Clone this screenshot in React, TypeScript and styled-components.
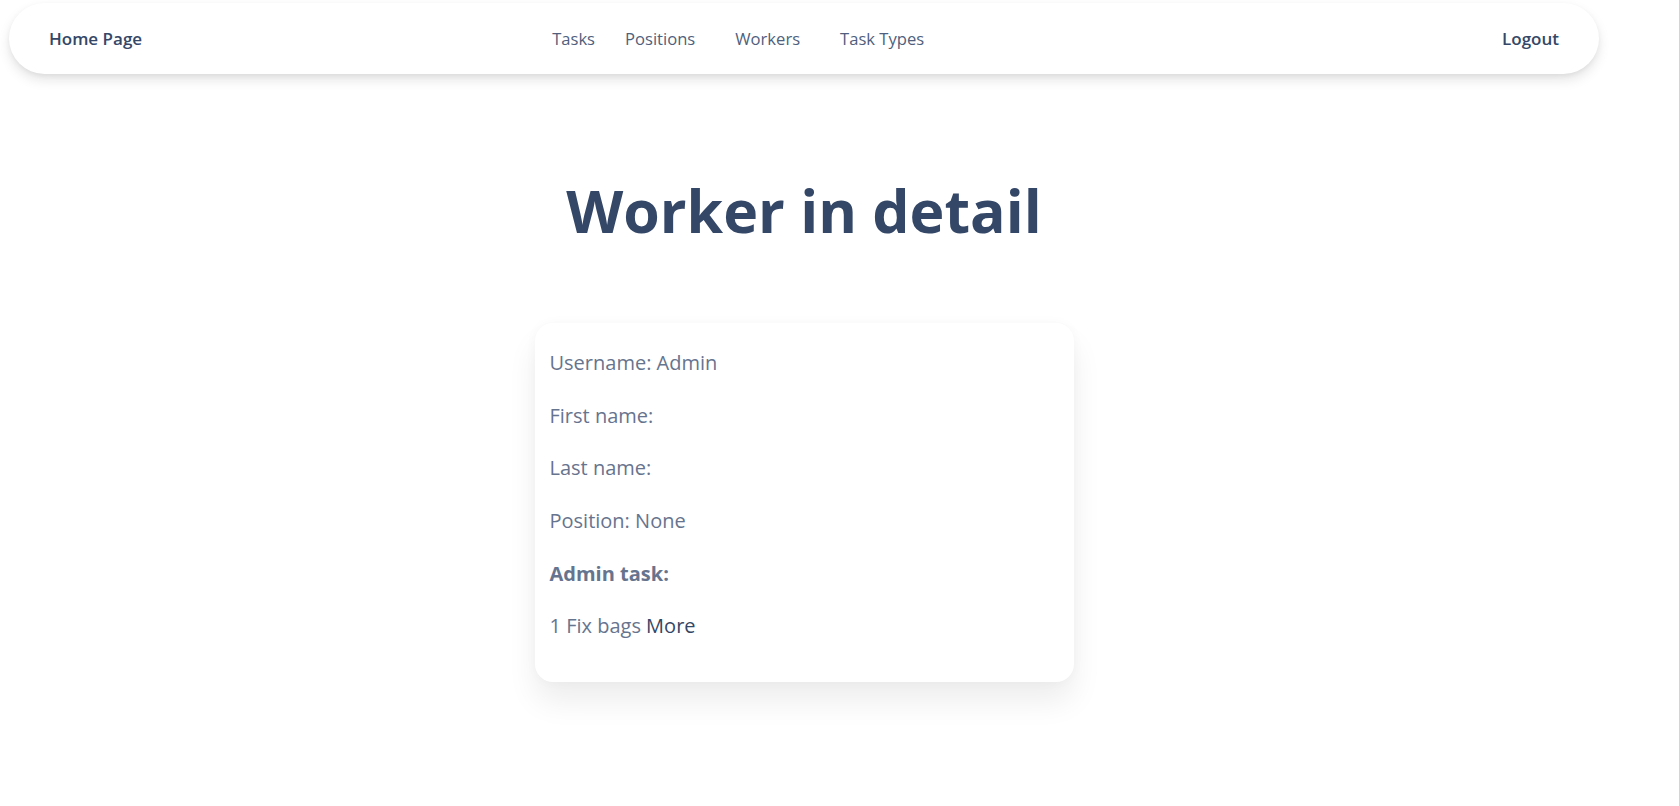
import React from "react";
import styled, { createGlobalStyle } from "styled-components";

const GlobalStyle = createGlobalStyle`
  html, body {
    margin: 0;
    padding: 0;
    background: #ffffff;
    font-family: "Open Sans", "Noto Sans", sans-serif;
  }
`;

const Page = styled.div`
  width: 1599px;
  min-height: 100vh;
  box-sizing: border-box;
  padding: 3px 0 80px 9px;
  display: flex;
  flex-direction: column;
  align-items: stretch;
`;

const NavBar = styled.nav`
  height: 71px;
  flex: none;
  border-radius: 36px;
  background: #ffffff;
  box-shadow: 0 6px 14px -2px rgba(20, 20, 20, 0.14), 0 2px 6px -1px rgba(20, 20, 20, 0.06);
  display: flex;
  align-items: center;
  padding: 0 40px 0 40px;
`;

const Brand = styled.a`
  font-size: 17px;
  font-weight: 600;
  color: #344767;
  text-decoration: none;
`;

const Links = styled.ul`
  list-style: none;
  margin: 0 0 0 410px;
  padding: 0;
  display: flex;
  align-items: center;
`;

const LinkItem = styled.li<{ $gap: number }>`
  margin-right: ${(p) => p.$gap}px;
`;

const NavLink = styled.a`
  font-size: 16.6px;
  font-weight: 400;
  color: #4f5f7d;
  text-decoration: none;
`;

const Logout = styled.a`
  margin-left: auto;
  font-size: 17px;
  font-weight: 600;
  color: #344767;
  text-decoration: none;
`;

const Title = styled.h1`
  margin: 100px 0 0;
  text-align: center;
  font-size: 59px;
  line-height: 72px;
  font-weight: 700;
  color: #344767;
`;

const Card = styled.section`
  align-self: center;
  width: 539px;
  box-sizing: border-box;
  margin-top: 77px;
  padding: 25px 15px 41px;
  background: #ffffff;
  border-radius: 18px;
  box-shadow: 0 20px 30px 0 rgba(0, 0, 0, 0.07), 0 0 12px 0 rgba(0, 0, 0, 0.03);
  display: flex;
  flex-direction: column;
  gap: 22.7px;
`;

const Row = styled.p<{ $strong?: boolean }>`
  margin: 0;
  font-size: 20px;
  line-height: 30px;
  font-weight: ${(p) => (p.$strong ? 700 : 400)};
  color: #67748e;
`;

const More = styled.a`
  color: #344767;
  text-decoration: none;
`;

const links = [
  { label: "Tasks", gap: 30 },
  { label: "Positions", gap: 40 },
  { label: "Workers", gap: 40 },
  { label: "Task Types", gap: 0 },
];

export default function App() {
  return (
    <>
      <GlobalStyle />
      <Page>
        <NavBar>
          <Brand href="#">Home Page</Brand>
          <Links>
            {links.map((l) => (
              <LinkItem key={l.label} $gap={l.gap}>
                <NavLink href="#">{l.label}</NavLink>
              </LinkItem>
            ))}
          </Links>
          <Logout href="#">Logout</Logout>
        </NavBar>
        <Title>Worker in detail</Title>
        <Card>
          <Row>Username: Admin</Row>
          <Row>First name: </Row>
          <Row>Last name: </Row>
          <Row>Position: None</Row>
          <Row $strong>Admin task:</Row>
          <Row>
            1 Fix bags <More href="#">More</More>
          </Row>
        </Card>
      </Page>
    </>
  );
}
